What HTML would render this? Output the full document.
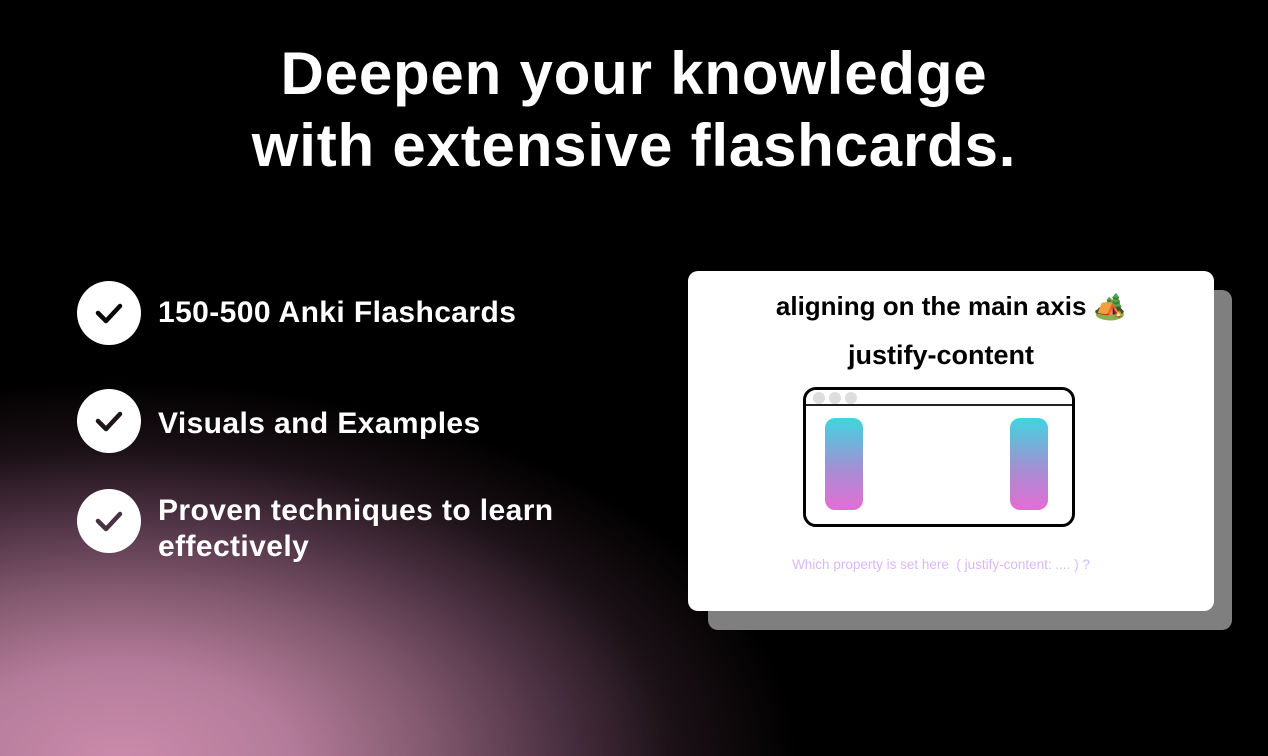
<!DOCTYPE html>
<html><head><meta charset="utf-8"><style>
*{margin:0;padding:0;box-sizing:border-box}
html,body{width:1268px;height:756px;overflow:hidden}
body{position:relative;font-family:"Liberation Sans",Arial,sans-serif;
background:radial-gradient(680px 380px at 120px 760px,#cb8aab 0%,#b47c9a 25%,#845a70 45%,#4a3040 65%,#1a1015 82%,rgba(0,0,0,0) 100%),#000}
h1{position:absolute;left:0;width:1268px;top:38px;text-align:center;color:#fff;font-size:60px;font-weight:bold;line-height:72px;letter-spacing:0.8px}
.item{position:absolute;left:77px;display:flex;align-items:flex-start;color:#fff;font-weight:bold;font-size:30px;line-height:36px;letter-spacing:0.4px}
.c{width:64px;height:64px;border-radius:50%;background:#fff;flex:none;display:flex;align-items:center;justify-content:center;margin-right:17px}
.shadow{position:absolute;left:708px;top:290px;width:524px;height:340px;border-radius:10px;background:#7f7f7f}
.card{position:absolute;left:688px;top:271px;width:526px;height:340px;border-radius:10px;background:#fff}
.t1{position:absolute;left:0;width:526px;top:20px;text-align:center;font-size:26px;font-weight:bold;color:#000}
.t2{position:absolute;left:0;width:506px;top:69px;text-align:center;font-size:27px;font-weight:bold;color:#000}
.br{position:absolute;left:115px;top:116px;width:272px;height:140px;border:3px solid #000;border-radius:13px;overflow:hidden}
.hd{position:absolute;left:0;top:0;width:100%;height:16px;border-bottom:2px solid #222}
.dot{position:absolute;top:2px;width:12px;height:12px;border-radius:50%;background:#ddd}
.bar{position:absolute;top:28px;width:38px;height:92px;border-radius:10px;background:linear-gradient(#40d4e0,#a48fd4 55%,#e66cd4)}
.q{position:absolute;left:0;width:506px;top:286px;text-align:center;font-size:13.5px;color:#d9b8fa}
</style></head><body>
<h1>Deepen your knowledge<br>with extensive flashcards.</h1>
<div class="item" style="top:281px"><div class="c"><svg width="34" height="34" viewBox="0 0 34 34"><path d="M6 17l8 8 14-15" fill="none" stroke="#0a0708" stroke-width="4.5" stroke-linecap="round" stroke-linejoin="round"/></svg></div><div style="margin-top:14px">150-500 Anki Flashcards</div></div>
<div class="item" style="top:389px"><div class="c"><svg width="34" height="34" viewBox="0 0 34 34"><path d="M6 17l8 8 14-15" fill="none" stroke="#1e1518" stroke-width="4.5" stroke-linecap="round" stroke-linejoin="round"/></svg></div><div style="margin-top:17px">Visuals and Examples</div></div>
<div class="item" style="top:489px"><div class="c"><svg width="34" height="34" viewBox="0 0 34 34"><path d="M6 17l8 8 14-15" fill="none" stroke="#4a3340" stroke-width="4.5" stroke-linecap="round" stroke-linejoin="round"/></svg></div><div style="margin-top:4px">Proven techniques to learn<br>effectively</div></div>
<div class="shadow"></div>
<div class="card">
<div class="t1">aligning on the main axis 🏕️</div>
<div class="t2">justify-content</div>
<div class="br"><div class="hd"><div class="dot" style="left:7px"></div><div class="dot" style="left:23px"></div><div class="dot" style="left:39px"></div></div>
<div class="bar" style="left:19px"></div><div class="bar" style="left:204px"></div></div>
<div class="q">Which property is set here &nbsp;( justify-content: .... ) ?</div>
</div>
</body></html>
